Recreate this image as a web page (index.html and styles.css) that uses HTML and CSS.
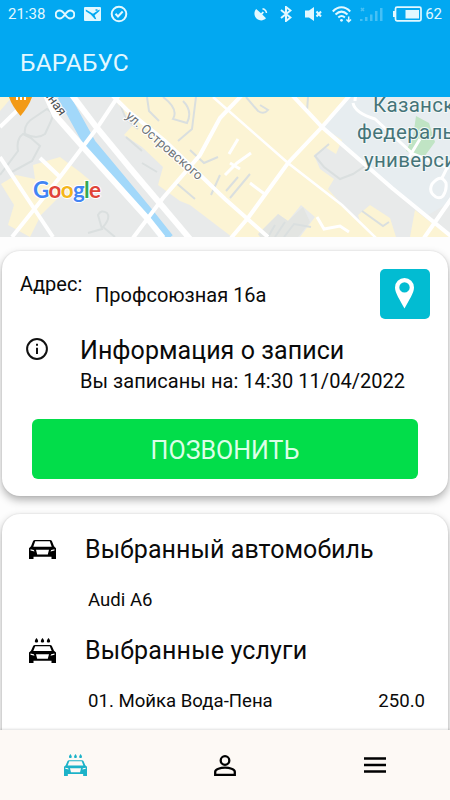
FILE: index.html
```
<!DOCTYPE html>
<html lang="ru">
<head>
  <meta charset="UTF-8" />
  <meta name="viewport" content="width=device-width, initial-scale=1.0"/>
  <title>БАРАБУС</title>
  <link rel="stylesheet" href="styles.css">
</head>
<body>

  <!-- Shared icons -->
  <svg class="sprite" aria-hidden="true">
    <symbol id="car" viewBox="0 0 27 19">
      <path fill-rule="evenodd" d="M6 0h15q1.500 0 2 1.200L25 6.300l2 1.900V19h-4.500v-2.200h-18V19H0V8.200l2-1.900L4 1.200Q4.500 0 6 0zM6.200 1.200 4.300 6.800h18.400l-1.900-5.600zM1.500 9.300v1.200l4 1-.7-1.500zM25.500 9.300v1.200l-4 1 .7-1.500zM7 9.800l1.200 4.700h10.600L20 9.800z"/>
    </symbol>
    <symbol id="carwash" viewBox="0 0 27 25">
      <path d="M7.500 0c2.400 3 2 4.500 0 4.500S5.100 3 7.500 0zM13.500 0c2.400 3 2 4.500 0 4.500s-2.400-1.500 0-4.500zM19.500 0c2.400 3 2 4.500 0 4.500s-2.400-1.500 0-4.500z"/>
      <path fill-rule="evenodd" d="M6 7h15q1.500 0 2 1.200l2 4.600 2 1.800V25h-4.500v-2.200h-18V25H0V14.600l2-1.800 2-4.600Q4.500 7 6 7zM6.200 8.200 4.300 13h18.400l-1.900-4.800zM1.500 15.600v1.200l4 .9-.7-1.400zM25.500 15.600v1.200l-4 .9.700-1.400zM7 16.300l1.200 4.400h10.600L20 16.300z"/>
    </symbol>
  </svg>

  <div class="status-bar">
    <div class="status-left">
      <span class="clock">21:38</span>
      <svg class="status-infinity" width="20" height="11" viewBox="0 0 20 11"><path d="M10 5.500C8 2.700 6.500 1.500 4.700 1.500a4 4 0 0 0 0 8C6.500 9.500 8 8.300 10 5.500s3.500-4 5.300-4a4 4 0 0 1 0 8C13.500 9.500 12 8.300 10 5.500z"/></svg>
      <svg width="17" height="14" viewBox="0 0 17 14"><path class="solid" fill-rule="evenodd" d="M1 0h15a1 1 0 0 1 1 1v12a1 1 0 0 1-1 1H1a1 1 0 0 1-1-1V1a1 1 0 0 1 1-1zM1.800 2.500v1.700l5 3.300 4 4.500 1.500.3-1.700-4L15.500 4V2.500L9 6.700zM11.500 2.300h2v1.500h-2z"/></svg>
      <svg width="18" height="18" viewBox="0 0 18 18"><circle cx="9" cy="9" r="7.300"/><path d="m5.500 8.800 2.500 2.700 4.700-5"/></svg>
    </div>
    <div class="status-right">
      <svg class="status-dish" width="14" height="14" viewBox="0 0 14 14"><path class="solid" d="M2.200 2C-.5 5 0 9.500 3 12c2.800 2 6.500 1.900 9-.7L8.300 7.500l1.700-2-1.300-1-1.700 1.800z"/><path class="thin" d="M8.500 1.700A5 5 0 0 1 12.500 6"/></svg>
      <svg class="status-bt" width="12" height="16" viewBox="0 0 12 16"><path d="m1 4 9.500 7.500L6 15V1l4.500 3.500L1 12"/></svg>
      <svg class="status-mute" width="17" height="14" viewBox="0 0 17 14"><path class="solid" d="M0 3.500h4L9 0v14l-5-3.500H0z"/><path d="m11.500 4.500 4.500 5m0-5-4.500 5"/></svg>
      <svg class="status-wifi" width="20" height="17" viewBox="0 0 20 17"><path d="M.8 5.500c5-5.700 12.400-5.700 17.400 0M3.500 8.500c4-3.800 8-3.800 12 0M6.300 11.500c2.300-2 4.400-2 6.600 0"/><circle class="solid" cx="9.500" cy="14.300" r="1.400"/><path class="thin" d="M16.700 10.500v5m-2.300-2 2.300 2.300 2.300-2.300"/></svg>
      <svg class="status-signal" width="23" height="15" viewBox="0 0 23 15"><path class="solid" d="M0 12h2.500v2H0zM5 10h2.500v4H5zM10 7.500h2.500V14H10zM15 4h2.500v10H15zM20 1h2.500v13H20z"/><path class="thin" d="m1 1 3 3m0-3L1 4"/></svg>
      <svg class="status-battery" width="29" height="16" viewBox="0 0 29 16"><path d="M4 1.200h22.500q1.500 0 1.500 1.500v10.600q0 1.500-1.500 1.500H4q-1.500 0-1.500-1.500V2.700Q2.500 1.200 4 1.200z"/><path class="solid" d="M0 5h2v6H0zM12.500 4H26v8.500H12.500z"/></svg>
      <span class="percent">62</span>
    </div>
  </div>

  <header class="app-bar">
    <h1>БАРАБУС</h1>
  </header>

  <svg class="map" width="450" height="140" viewBox="0 0 450 140">
    <rect class="land" width="450" height="140"/>
    <!-- blocks -->
    <path class="campus" d="M348 0H450V105L428 118 390 90 322 30z"/>
    <g class="built">
      <path d="M113 0H348L322 30 342 43 336 57 325 50 314 58 320 72 334 82 328 92 342 108 375 140H300L315 120 301 108 288 124 278 117 268 140H232L190 108 180 104 158 88 163 70 142 50 124 38 133 28z"/>
      <path d="M60 60 80 75 92 85 80 96 62 97 41 118 30 140 8 128 14 108 1 87 16 78 35 82 33 68z"/>
      <path d="M358 118 370 108 390 121 396 140H365zM415 113 450 140H410z"/>
      <path d="M0 0h12L0 14z"/>
    </g>
    <path class="park" d="M416 19 429 26 435 45 424 60 406 54 413 40z"/>
    <path class="greyblock" d="M288 124 278 117 258 137 260 140H298L310 125 303 110z"/>
    <!-- lanes and building outlines -->
    <g class="outline">
      <path d="M25 37q-2-10 10-17l12-8q8 4 4 12l-6 13q-8 6-20 0zM0 78l18-24q-2-12 5-17l8 4 9 8-8 15-22 12"/>
      <path d="M118 2l8 20 12 10M147 0l2 14 10 10M163 0q16 12 10 22l14 4q6-12-4-22M196 0l-4 32-14 12M126 40l16 14M142 66l15 9M190 53l14 13 14-6M175 85l20 17M220 78l-9 20"/>
      <path d="M246 0l12 14q6 4 10-1l-8-5M308 0l-1 14M329 47l-14 12 9 11 16 12 13-5 12-8 12 8M226 94l12-14M230 101l20-24M268 140l7-12M275 140l10-15M284 140l10-13 17 3M362 114l21 15 6-4"/>
      <path d="M88 136l14-4-4-14q3-6 9-2 4 5-4 14l12 10"/>
    </g>
    <path class="lane" d="M353 6q2 10 22 16l38 35 36 14M420 42l-12 20M229 57l9-15M225 78l12-12 14-10M230 66l10 6M250 86l16 12M317 120l7 12 16-3 9 6M436 100q-8-5-4-13 9-11 14-1 1 7-3 13-3 3-7 1zM442 81l8-16M355 4q0-8 6-8"/>
    <!-- river with embankment roads -->
    <path class="river" d="M63-2 90 47 125 89 149 118 168 142"/>
    <path class="road wide" d="M46-2 55 18 83 50 147 121 163 141M72-2 97 31 130 71 163 110 190 142"/>
    <path class="road" d="M119-2 97 31 60 80 12 140M0 60 35 113 53 140M40 61l20 19M0 30 30 1M242-2 220 21 200 58 163 101 133 141M112-2 127 13 165 44 225 102 268 140M292-2 322 30 392 91 452 140M350-2 322 30 288 66 248 121 231 141M456 95 424 141"/>
    <path class="road narrow" d="M213 0 288 66 342 108 376 141"/>
    <!-- labels -->
    <path class="pin" d="M9 0H32Q29 9 20.500 19 12 9 9 0z"/>
    <path class="fork" d="M17 0v3M21 0v3M25 0v3"/>
    <text class="street dark" transform="translate(43 -4) rotate(54)">нная</text>
    <text class="street" transform="translate(125 20) rotate(41)" textLength="97">ул. Островского</text>
    <g class="place">
      <text x="373" y="15">Казанский</text>
      <text x="357" y="42">федеральный</text>
      <text x="364" y="70">университет</text>
    </g>
    <text class="google" x="33" y="101" textLength="68"><tspan fill="#4285f4">G</tspan><tspan fill="#e04437">o</tspan><tspan fill="#f4b619">o</tspan><tspan fill="#4285f4">g</tspan><tspan fill="#34a853">l</tspan><tspan fill="#e04437">e</tspan></text>
  </svg>

  <main class="content">
    <section class="card booking">
      <div class="address">
        <span class="address-label">Адрес:</span>
        <span class="address-value">Профсоюзная 16а</span>
        <button class="map-btn" aria-label="Карта">
          <svg width="19" height="31" viewBox="0 0 19 31"><path fill-rule="evenodd" d="M9.500 0A9.500 9.500 0 0 1 19 9.500C19 15 14 22 9.500 30.500 5 22 0 15 0 9.500A9.500 9.500 0 0 1 9.500 0zm0 4.200a5.200 5.200 0 1 0 0 10.400 5.200 5.200 0 0 0 0-10.400z"/></svg>
        </button>
      </div>
      <div class="info">
        <svg class="info-icon" width="22" height="22" viewBox="0 0 22 22"><circle cx="11" cy="11" r="9.900"/><path d="M11 9.800v6.200M11 5.800v2"/></svg>
        <div class="info-text">
          <h2>Информация о записи</h2>
          <p>Вы записаны на: 14:30 11/04/2022</p>
        </div>
      </div>
      <button class="call-btn">ПОЗВОНИТЬ</button>
    </section>

    <section class="card order">
      <div class="row-title">
        <svg class="row-icon" width="27" height="19"><use href="#car"/></svg>
        <h2>Выбранный автомобиль</h2>
      </div>
      <div class="row-item car-name"><span>Audi A6</span></div>
      <div class="row-title">
        <svg class="row-icon wash" width="27" height="25"><use href="#carwash"/></svg>
        <h2 class="services">Выбранные услуги</h2>
      </div>
      <div class="row-item"><span class="service">01. Мойка Вода-Пена</span><span class="price">250.0</span></div>
    </section>
  </main>

  <nav class="bottom-nav">
    <a class="nav-item active"><svg width="23" height="22" viewBox="0 0 27 25" preserveAspectRatio="none"><use href="#carwash" width="27" height="25"/></svg></a>
    <a class="nav-item"><svg width="22" height="21" viewBox="0 0 22 21"><circle cx="11" cy="5.500" r="4.300"/><path d="M1.200 19.800v-3c0-2.600 5.300-4.100 9.800-4.100s9.800 1.500 9.800 4.100v3z"/></svg></a>
    <a class="nav-item"><svg width="22" height="16" viewBox="0 0 22 16"><path d="M0 1.500h22M0 8h22M0 14.500h22"/></svg></a>
  </nav>

</body>
</html>
```
FILE: styles.css
```
* {
  box-sizing: border-box;
}

body {
  margin: 0;
  width: 450px;
  height: 800px;
  display: flex;
  flex-direction: column;
  overflow: hidden;
  background-color: #fdfdfd;
  color: #0a0a0a;
  font-family: Roboto, "Noto Sans", sans-serif;
}

h1, h2, p {
  margin: 0;
  font-weight: normal;
  white-space: nowrap;
}

button {
  border: none;
  padding: 0;
  font-family: inherit;
  cursor: pointer;
}

svg {
  display: block;
  flex: none;
}

.sprite {
  display: none;
}

/* Status bar */
.status-bar {
  flex: none;
  height: 28px;
  padding: 0 8px;
  display: flex;
  justify-content: space-between;
  background-color: #02a8f1;
  color: #e2f8ff;
  font-size: 15px;
}

.status-left, .status-right {
  display: flex;
  align-items: center;
}

.status-left {
  gap: 9px;
}

.clock {
  width: 38px;
}

.status-bar svg {
  fill: none;
  stroke: #e2f8ff;
  stroke-width: 2;
}

.status-bar .solid {
  fill: #e2f8ff;
  stroke: none;
}

.status-bar .thin {
  stroke-width: 1.5;
}

.status-dish { margin-right: 12px; }
.status-bt { margin-right: 13px; }
.status-mute { margin-right: 10px; }
.status-wifi { margin-right: 8px; }
.status-signal { margin-right: 10px; opacity: 0.3; }
.status-battery { margin-right: 3px; }

.status-bar .status-battery {
  stroke-width: 1.7;
}

/* App bar */
.app-bar {
  flex: none;
  height: 69px;
  padding: 21px 20px 0;
  background-color: #02a8f1;
  color: #e2f8ff;
}

.app-bar h1 {
  font-size: 24.500px;
  line-height: 28px;
  letter-spacing: 0.2px;
}

/* Map */
.land { fill: #e8eaea; }
.campus { fill: #e7edf0; }
.built { fill: #fcf4d4; }
.park { fill: #c0e4c4; }
.greyblock { fill: #e3e5e2; }

.outline {
  fill: none;
  stroke: #dadfdf;
  stroke-width: 2;
}

.lane {
  fill: none;
  stroke: #fff;
  stroke-width: 3;
}

.river {
  fill: none;
  stroke: #a2d8fa;
  stroke-width: 12;
}

.road {
  fill: none;
  stroke: #fff;
  stroke-width: 4;
}

.road.wide { stroke-width: 6; }
.road.narrow { stroke-width: 2.5; }

.pin { fill: #f29a16; }

.fork {
  stroke: #fff;
  stroke-width: 2;
}

.street {
  fill: #6e7478;
  font-size: 13px;
  stroke: #fff;
  stroke-width: 2;
  paint-order: stroke;
}

.street.dark { fill: #4b4f52; }

.place {
  fill: #457478;
  font-size: 20.500px;
  letter-spacing: 0.3px;
  stroke: #f4f8f8;
  stroke-width: 2;
  paint-order: stroke;
}

.google {
  font-family: Lato, sans-serif;
  font-size: 22.500px;
  font-weight: bold;
  stroke: #fff;
  stroke-width: 2;
  paint-order: stroke;
}

/* Cards */
.content {
  flex: 1;
  min-height: 0;
  overflow: hidden;
  padding: 14px 2px 0;
  display: flex;
  flex-direction: column;
  gap: 18px;
}

.card {
  flex: none;
  background-color: #fff;
  border-radius: 18px;
  box-shadow: 0 4px 8px rgba(0, 0, 0, 0.3), 0 0 2px rgba(0, 0, 0, 0.12);
}

.booking {
  height: 245px;
  padding: 18px 18px 0;
}

.address {
  height: 50px;
  display: flex;
  font-size: 20px;
  line-height: 24px;
}

.address-label {
  width: 75px;
  padding-top: 3px;
}

.address-value {
  flex: 1;
  padding-top: 14px;
}

.map-btn {
  width: 50px;
  height: 50px;
  display: flex;
  align-items: center;
  justify-content: center;
  background-color: #02bcd2;
  border-radius: 5px;
  padding: 0 2px 2px 0;
}

.map-btn svg {
  fill: #fff;
}

.info {
  display: flex;
  padding: 17px 0 0 6px;
}

.info-icon {
  margin: 2px 32px 0 0;
  fill: none;
  stroke: #111;
  stroke-width: 2;
}

h2 {
  font-size: 25px;
  line-height: 30px;
  letter-spacing: 0.06px;
}

.info-text p {
  font-size: 20px;
  line-height: 24px;
  margin-top: 3px;
  letter-spacing: 0.04px;
}

.call-btn {
  display: block;
  width: 386px;
  height: 60px;
  margin: 26px 0 0 12px;
  padding-top: 2px;
  background-color: #02dd4a;
  border-radius: 6px;
  color: #dcffe8;
  font-size: 25px;
}

.order {
  height: 300px;
  padding: 21px 23px 0 27px;
}

.row-title {
  display: flex;
  align-items: center;
  height: 30px;
}

.row-icon {
  margin: -2px 29px 0 0;
}

.services {
  letter-spacing: 0.15px;
}

.row-item {
  display: flex;
  justify-content: space-between;
  padding: 24px 0 0 59px;
  font-size: 18.600px;
  line-height: 22px;
}

.car-name {
  height: 71px;
}

/* Bottom navigation */
.bottom-nav {
  flex: none;
  height: 70px;
  display: flex;
  background-color: #fdf9f5;
  box-shadow: 0 -1px 2px rgba(0, 0, 0, 0.12);
  position: relative;
}

.nav-item {
  flex: 1;
  display: flex;
  align-items: center;
  justify-content: center;
}

.nav-item svg {
  fill: none;
  stroke: #000;
  stroke-width: 2.3;
}

.nav-item.active svg {
  fill: #1cb2c8;
  stroke: none;
}
```
